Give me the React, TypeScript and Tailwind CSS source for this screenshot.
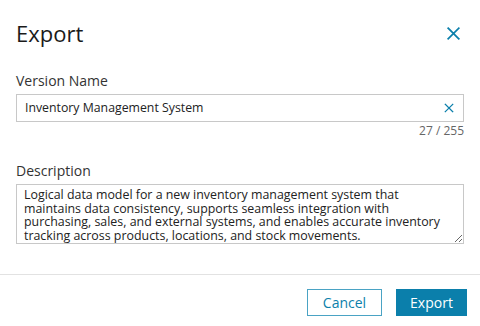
import React, { useState } from "react";

function XIcon({ className }: { className?: string }) {
  return (
    <svg viewBox="0 0 16 16" className={className} fill="none" stroke="currentColor" strokeWidth={1.6} strokeLinecap="square">
      <path d="M3 3 L13 13 M13 3 L3 13" />
    </svg>
  );
}

export default function App() {
  const [name, setName] = useState("Inventory Management System");
  const [desc, setDesc] = useState(
    "Logical data model for a new inventory management system that maintains data consistency, supports seamless integration with purchasing, sales, and external systems, and enables accurate inventory tracking across products, locations, and stock movements."
  );

  return (
    <div className="w-[480px] h-[326px] bg-white text-[#222] font-['Open_Sans',sans-serif] flex flex-col">
      <div className="flex items-center justify-between pl-4 pr-[18px] pt-[18px] h-[48px]">
        <h1 className="text-[22px] leading-[30px] font-medium text-[#1a1a1a]">Export</h1>
        <button className="text-[#0b7fab]">
          <XIcon className="w-[17px] h-[17px]" />
        </button>
      </div>

      <div className="px-4 flex flex-col">
        <label className="mt-[23px] text-[14px] leading-[20px] text-[#333]">Version Name</label>
        <div className="mt-[3px] h-[28px] border border-[#c8c8c8] flex items-center pl-2 pr-2">
          <input
            value={name}
            onChange={(e) => setName(e.target.value)}
            className="flex-1 outline-none text-[12.3px] text-[#222] bg-transparent"
          />
          <button className="text-[#0b7fab]" onClick={() => setName("")}>
            <XIcon className="w-[12px] h-[12px]" />
          </button>
        </div>
        <div className="text-right text-[12px] leading-[16px] text-[#666] mt-[1px]">{name.length} / 255</div>

        <label className="mt-[22px] text-[14px] leading-[20px] text-[#333]">Description</label>
        <textarea
          value={desc}
          onChange={(e) => setDesc(e.target.value)}
          className="mt-[3px] h-[60px] border border-[#c8c8c8] pl-[7px] pr-2 pt-[3px] text-[12.4px] leading-[13.5px] text-[#222] outline-none resize-y"
        />
      </div>

      <div className="mt-auto border-t border-[#e2e2e2] h-[52px] flex items-start justify-end gap-[14px] pt-[14px] pr-[13px]">
        <button className="h-[27px] w-[75px] border border-[#4aa3c4] text-[#0b7fab] text-[14px] bg-white">Cancel</button>
        <button className="h-[27px] w-[71px] bg-[#0b7fab] text-white text-[14px]">Export</button>
      </div>
    </div>
  );
}
